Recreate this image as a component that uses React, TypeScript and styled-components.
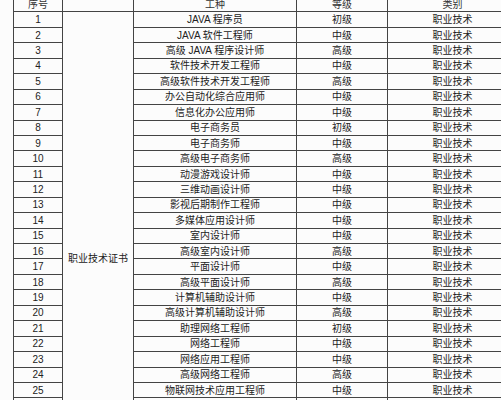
import styled, { createGlobalStyle } from 'styled-components';

const GlobalStyle = createGlobalStyle`
  html, body {
    margin: 0;
    padding: 0;
    height: 400px;
    overflow: hidden;
    background: #fcfcfc;
  }
`;

const Page = styled.div`
  padding-left: 13px;
  margin-top: -4px;
`;

const Table = styled.table`
  border-collapse: collapse;
  table-layout: fixed;
  width: 504px;
  font-family: "Liberation Sans", "Noto Sans CJK SC", sans-serif;
  font-size: 10px;
  color: #222;
`;

const Row = styled.tr`
  height: 15.44px;
`;

const Cell = styled.td`
  border: 1px solid #444;
  padding: 0;
  text-align: center;
  vertical-align: middle;
  line-height: 13px;
  white-space: nowrap;
  overflow: hidden;
`;

const HeadCell = styled(Cell).attrs({ as: 'th' })`
  font-weight: normal;
  color: #333;
`;

const GroupCell = styled(Cell)`
  font-size: 10px;
`;

const jobs: [string, string][] = [
  ['JAVA 程序员', '初级'],
  ['JAVA 软件工程师', '中级'],
  ['高级 JAVA 程序设计师', '高级'],
  ['软件技术开发工程师', '中级'],
  ['高级软件技术开发工程师', '高级'],
  ['办公自动化综合应用师', '中级'],
  ['信息化办公应用师', '中级'],
  ['电子商务员', '初级'],
  ['电子商务师', '中级'],
  ['高级电子商务师', '高级'],
  ['动漫游戏设计师', '中级'],
  ['三维动画设计师', '中级'],
  ['影视后期制作工程师', '中级'],
  ['多媒体应用设计师', '中级'],
  ['室内设计师', '中级'],
  ['高级室内设计师', '高级'],
  ['平面设计师', '中级'],
  ['高级平面设计师', '高级'],
  ['计算机辅助设计师', '中级'],
  ['高级计算机辅助设计师', '高级'],
  ['助理网络工程师', '初级'],
  ['网络工程师', '中级'],
  ['网络应用工程师', '中级'],
  ['高级网络工程师', '高级'],
  ['物联网技术应用工程师', '中级'],
  ['数据库管理工程师', '中级'],
];

// the merged cell runs on past the crop, so the table keeps a few rows below it
const GROUP_ROWS = 32;

export default function App() {
  const rows = Array.from({ length: GROUP_ROWS }, (_, i) => jobs[i]);
  return (
    <>
      <GlobalStyle />
      <Page>
        <Table>
          <colgroup>
            <col style={{ width: 49 }} />
            <col style={{ width: 71 }} />
            <col style={{ width: 163 }} />
            <col style={{ width: 91 }} />
            <col style={{ width: 130 }} />
          </colgroup>
          <thead>
            <Row>
              <HeadCell>序号</HeadCell>
              <HeadCell></HeadCell>
              <HeadCell>工种</HeadCell>
              <HeadCell>等级</HeadCell>
              <HeadCell>类别</HeadCell>
            </Row>
          </thead>
          <tbody>
            {rows.map((job, i) => (
              <Row key={i}>
                <Cell>{job ? i + 1 : ''}</Cell>
                {i === 0 && <GroupCell rowSpan={GROUP_ROWS}>职业技术证书</GroupCell>}
                <Cell>{job ? job[0] : ''}</Cell>
                <Cell>{job ? job[1] : ''}</Cell>
                <Cell>{job ? '职业技术' : ''}</Cell>
              </Row>
            ))}
          </tbody>
        </Table>
      </Page>
    </>
  );
}
